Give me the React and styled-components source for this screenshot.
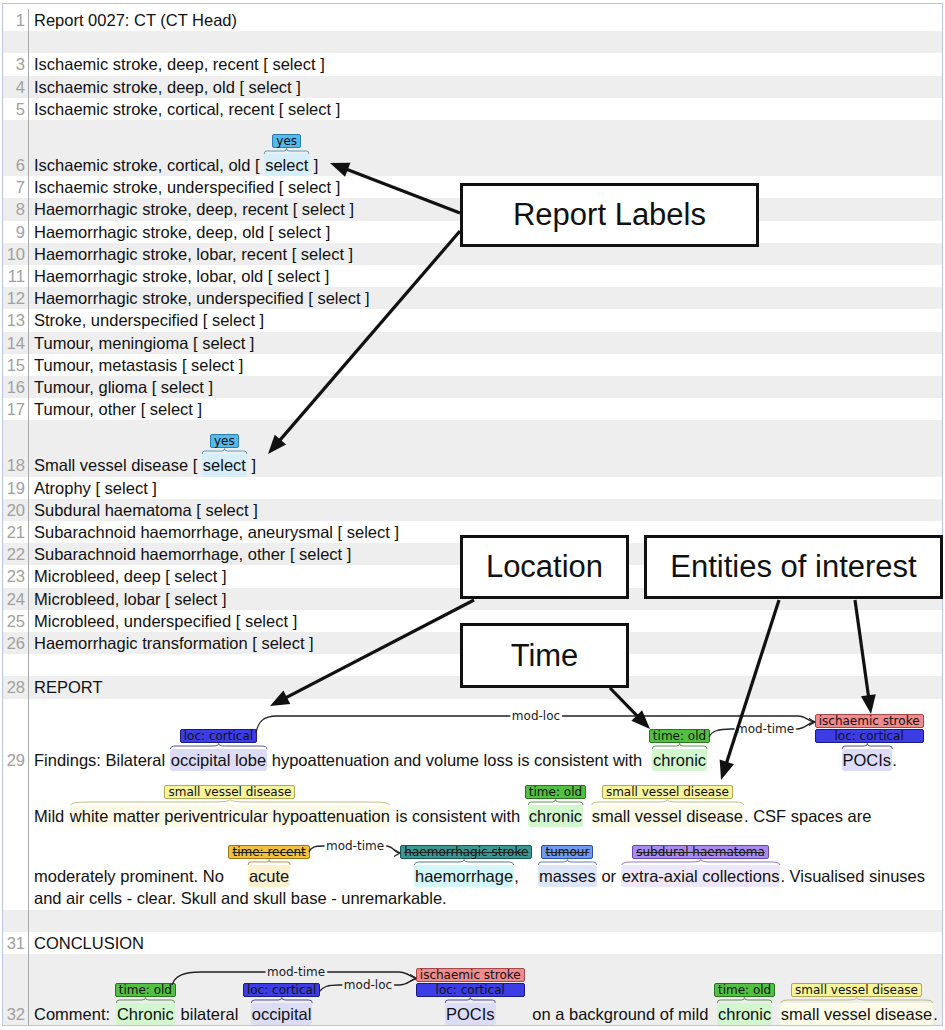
import React from 'react';
import styled, { createGlobalStyle } from 'styled-components';

const GlobalStyle = createGlobalStyle`
  html, body {
    margin: 0;
    padding: 0;
    background: #fff;
  }
  body {
    font-family: 'Liberation Sans', Arial, sans-serif;
    color: #111;
  }
`;

// annotation types, as the visualiser colours them
const TYPES = {
  yes: { fill: '#55b9ea', edge: '#2b7dab', hl: '#d5eef9' },
  loc: { fill: '#3d3de6', edge: '#1c1c80', hl: '#dcdcf7' },
  old: { fill: '#52c142', edge: '#2a7420', hl: '#d2f6cd' },
  svd: { fill: '#f7f49c', edge: '#aea955', hl: '#fcfbe8' },
  isch: { fill: '#f08a8c', edge: '#a5484a', hl: '#dcdcf7' },
  recent: { fill: '#f0c13e', edge: '#9c7818', hl: '#fcf1cf' },
  haem: { fill: '#3a9893', edge: '#1b5753', hl: '#d3f7f8' },
  tumour: { fill: '#6e9af0', edge: '#2c50a0', hl: '#dde5f9' },
  subdural: { fill: '#a98bf0', edge: '#6749ad', hl: '#ede7fb' },
};

const Page = styled.div`
  position: relative;
  width: 945px;
  height: 1030px;
  overflow: hidden;
`;

const Frame = styled.div`
  box-sizing: border-box;
  width: 941px;
  margin: 3px 0 0 2px;
  padding-top: 5px;
  border: 1px solid #b8c6e4;
`;

const Row = styled.div`
  display: grid;
  grid-template-columns: 25px 1fr;
  align-items: baseline;
  background: ${(p) => (p.$n % 2 ? '#ffffff' : '#eeeeee')};
  font-size: 16.5px;
  line-height: 22.2px;
`;

const LineNo = styled.div`
  padding-right: 3px;
  text-align: right;
  color: #a0a0a0;
`;

const Cell = styled.div`
  min-height: 22.2px;
  padding-left: 5px;
  border-left: 1px solid #a9a9a9;
  white-space: nowrap;
`;

const SubLine = styled.div`
  padding-top: ${(p) => p.$pad || 0}px;
  white-space: nowrap;
`;

const AnnBox = styled.span`
  display: inline-block;
  vertical-align: baseline;
  text-align: center;
  margin-left: ${(p) => p.$gap || 0}px;
  margin-right: ${(p) => p.$after || 0}px;
`;

const Stack = styled.span`
  display: flex;
  flex-direction: column;
  gap: 1px;
  width: max-content;
  margin: 0 auto;
`;

const Tag = styled.span`
  display: block;
  box-sizing: border-box;
  height: 14px;
  padding: 0 3px;
  border: 1px solid ${(p) => p.$t.edge};
  border-radius: 2px;
  background: ${(p) => p.$t.fill};
  font-family: 'DejaVu Sans', 'Liberation Sans', sans-serif;
  font-size: 12px;
  line-height: 12px;
  color: #111;
  text-decoration: ${(p) => (p.$neg ? 'line-through' : 'none')};
  text-decoration-color: #222;
`;

const Chunk = styled.span`
  display: block;
  white-space: nowrap;
`;

const Body = styled.span`
  position: relative;
  display: inline-block;
  vertical-align: baseline;
  padding-top: 6px;
`;

const BraceSvg = styled.svg`
  position: absolute;
  left: 0;
  top: 0;
  width: 100%;
  height: 6px;
  overflow: visible;
`;

const Hl = styled.span`
  display: block;
  padding: 0 1px;
  border-radius: 3px;
  background: ${(p) => p.$bg};
`;

const Overlay = styled.svg`
  position: absolute;
  left: 0;
  top: 0;
  overflow: visible;
  pointer-events: none;
`;

const ArcText = styled.text`
  font-family: 'DejaVu Sans', sans-serif;
  font-size: 12px;
  fill: #1a1a1a;
  stroke: ${(p) => p.$bg};
  stroke-width: 5px;
  paint-order: stroke;
  text-anchor: middle;
`;

const Callout = styled.div`
  position: absolute;
  left: ${(p) => p.$x}px;
  top: ${(p) => p.$y}px;
  width: ${(p) => p.$w}px;
  height: ${(p) => p.$h}px;
  box-sizing: border-box;
  display: flex;
  align-items: center;
  justify-content: center;
  border: 3px solid #111;
  background: #fff;
  font-size: 31px;
  color: #111;
`;

const L = (t, text, neg) => ({ t, text, neg });

function Brace({ color }) {
  return (
    <BraceSvg viewBox="0 0 100 6" preserveAspectRatio="none">
      <path
        d="M0.5,6 Q0.5,3 6,3 L44,3 Q50,3 50,0.5 Q50,3 56,3 L94,3 Q99.5,3 99.5,6"
        fill="none"
        stroke={color}
        strokeOpacity="0.75"
        strokeWidth="1"
        vectorEffect="non-scaling-stroke"
      />
    </BraceSvg>
  );
}

function Ann({ labels, gap, after, punct, children }) {
  const last = TYPES[labels[labels.length - 1].t];
  return (
    <AnnBox $gap={gap} $after={after}>
      <Stack>
        {labels.map((l) => (
          <Tag key={l.text + l.t} $t={TYPES[l.t]} $neg={l.neg}>
            {l.text}
          </Tag>
        ))}
      </Stack>
      <Chunk>
        <Body>
          <Brace color={last.edge} />
          <Hl $bg={last.hl}>{children}</Hl>
        </Body>
        {punct}
      </Chunk>
    </AnnBox>
  );
}

function Arrow({ from, to }) {
  const [x1, y1] = from;
  const [x2, y2] = to;
  const len = Math.hypot(x2 - x1, y2 - y1);
  const ux = (x2 - x1) / len;
  const uy = (y2 - y1) / len;
  const hl = 19;
  const hw = 7.5;
  const bx = x2 - ux * hl;
  const by = y2 - uy * hl;
  const pts = `${x2},${y2} ${bx - uy * hw},${by + ux * hw} ${bx + uy * hw},${by - ux * hw}`;
  return (
    <g>
      <line x1={x1} y1={y1} x2={bx + ux * 2} y2={by + uy * 2} stroke="#111" strokeWidth="3.2" />
      <polygon points={pts} fill="#111" />
    </g>
  );
}

function Chevron({ x, y }) {
  return <path d={`M${x - 6},${y - 3.5} L${x},${y} L${x - 6},${y + 3.5}`} fill="none" stroke="#222" strokeWidth="1.2" />;
}

const plain = {
  1: 'Report 0027: CT (CT Head)',
  3: 'Ischaemic stroke, deep, recent [ select ]',
  4: 'Ischaemic stroke, deep, old [ select ]',
  5: 'Ischaemic stroke, cortical, recent [ select ]',
  7: 'Ischaemic stroke, underspecified [ select ]',
  8: 'Haemorrhagic stroke, deep, recent [ select ]',
  9: 'Haemorrhagic stroke, deep, old [ select ]',
  10: 'Haemorrhagic stroke, lobar, recent [ select ]',
  11: 'Haemorrhagic stroke, lobar, old [ select ]',
  12: 'Haemorrhagic stroke, underspecified [ select ]',
  13: 'Stroke, underspecified [ select ]',
  14: 'Tumour, meningioma [ select ]',
  15: 'Tumour, metastasis [ select ]',
  16: 'Tumour, glioma [ select ]',
  17: 'Tumour, other [ select ]',
  19: 'Atrophy [ select ]',
  20: 'Subdural haematoma [ select ]',
  21: 'Subarachnoid haemorrhage, aneurysmal [ select ]',
  22: 'Subarachnoid haemorrhage, other [ select ]',
  23: 'Microbleed, deep [ select ]',
  24: 'Microbleed, lobar [ select ]',
  25: 'Microbleed, underspecified [ select ]',
  26: 'Haemorrhagic transformation [ select ]',
  28: 'REPORT',
  31: 'CONCLUSION',
};

const blank = new Set([2, 27, 30]);

const special = {
  6: (
    <SubLine $pad={14}>
      {'Ischaemic stroke, cortical, old [ '}
      <Ann labels={[L('yes', 'yes')]}>select</Ann>
      {' ]'}
    </SubLine>
  ),
  18: (
    <SubLine $pad={14}>
      {'Small vessel disease [ '}
      <Ann labels={[L('yes', 'yes')]}>select</Ann>
      {' ]'}
    </SubLine>
  ),
  29: (
    <>
      <SubLine $pad={15}>
        {'Findings: Bilateral '}
        <Ann labels={[L('loc', 'loc: cortical')]}>occipital lobe</Ann>
        {' hypoattenuation and volume loss is consistent with '}
        <Ann gap={2} labels={[L('old', 'time: old')]}>chronic</Ann>{' '}
        <Ann gap={100} punct="." labels={[L('isch', 'ischaemic stroke'), L('loc', 'loc: cortical')]}>
          POCIs
        </Ann>
      </SubLine>
      <SubLine $pad={14}>
        {'Mild '}
        <Ann labels={[L('svd', 'small vessel disease')]}>white matter periventricular hypoattenuation</Ann>
        {' is consistent with '}
        <Ann labels={[L('old', 'time: old')]}>chronic</Ann>{' '}
        <Ann labels={[L('svd', 'small vessel disease')]}>small vessel disease</Ann>
        {'. CSF spaces are'}
      </SubLine>
      <SubLine $pad={18}>
        {'moderately prominent. No '}
        <Ann labels={[L('recent', 'time: recent', true)]}>acute</Ann>{' '}
        <Ann gap={86} punct="," labels={[L('haem', 'haemorrhagic stroke', true)]}>
          haemorrhage
        </Ann>{' '}
        <Ann gap={1} labels={[L('tumour', 'tumour', true)]}>masses</Ann>
        {' or '}
        <Ann labels={[L('subdural', 'subdural haematoma', true)]}>extra-axial collections</Ann>
        {'. Visualised sinuses'}
      </SubLine>
      <SubLine>and air cells - clear. Skull and skull base - unremarkable.</SubLine>
    </>
  ),
  32: (
    <SubLine $pad={14}>
      {'Comment: '}
      <Ann labels={[L('old', 'time: old')]}>Chronic</Ann>
      {' bilateral '}
      <Ann labels={[L('loc', 'loc: cortical')]}>occipital</Ann>{' '}
      <Ann gap={91} after={3} labels={[L('isch', 'ischaemic stroke'), L('loc', 'loc: cortical')]}>
        POCIs
      </Ann>
      {' on a background of mild '}
      <Ann gap={1} labels={[L('old', 'time: old')]}>chronic</Ann>{' '}
      <Ann labels={[L('svd', 'small vessel disease')]}>small vessel disease</Ann>
      {'.'}
    </SubLine>
  ),
};

const rows = Array.from({ length: 32 }, (_, i) => i + 1);

export default function App() {
  return (
    <Page>
      <GlobalStyle />
      <Frame>
        {rows.map((n) => (
          <Row key={n} $n={n}>
            <LineNo>{blank.has(n) ? '\u00a0' : n}</LineNo>
            <Cell>{special[n] || plain[n] || '\u00a0'}</Cell>
          </Row>
        ))}
      </Frame>

      <Overlay width="945" height="1030" viewBox="0 0 945 1030">
        <g fill="none" stroke="#222" strokeWidth="1.3">
          {/* report line 29 */}
          <path d="M256,733 C258,722 263,716 277,716 L798,716 C806,716 809,722 815,722" />
          <path d="M709,737 C712,731 718,729 731,729 L797,729 C805,729 809,722 815,722" />
          <path d="M309,852 C311,847 315,846 323,846 L386,846 C393,846 395,853 400,853" />
          {/* conclusion line 32 */}
          <path d="M172,985 C175,976 183,972 201,972 L399,972 C408,972 411,978 416,978" />
          <path d="M320,991 C323,987 327,985 339,985 L399,985 C408,985 411,979 416,979" />
        </g>
        <Chevron x={815} y={722} />
        <Chevron x={400} y={853} />
        <Chevron x={416} y={978} />
        <ArcText x="536" y="720" $bg="#fff">mod-loc</ArcText>
        <ArcText x="765" y="733" $bg="#fff">mod-time</ArcText>
        <ArcText x="355" y="850" $bg="#fff">mod-time</ArcText>
        <ArcText x="296" y="976" $bg="#eee">mod-time</ArcText>
        <ArcText x="368" y="989" $bg="#eee">mod-loc</ArcText>

        <Arrow from={[460, 213]} to={[330, 163]} />
        <Arrow from={[460, 231]} to={[268, 454]} />
        <Arrow from={[474, 600]} to={[270, 706]} />
        <Arrow from={[610, 688]} to={[650, 729]} />
        <Arrow from={[779, 600]} to={[721, 780]} />
        <Arrow from={[855, 600]} to={[871, 714]} />
      </Overlay>

      <Callout $x={460} $y={183} $w={299} $h={64}>Report Labels</Callout>
      <Callout $x={460} $y={535} $w={169} $h={64}>Location</Callout>
      <Callout $x={644} $y={535} $w={299} $h={64}>Entities of interest</Callout>
      <Callout $x={460} $y={623} $w={169} $h={65}>Time</Callout>
    </Page>
  );
}
